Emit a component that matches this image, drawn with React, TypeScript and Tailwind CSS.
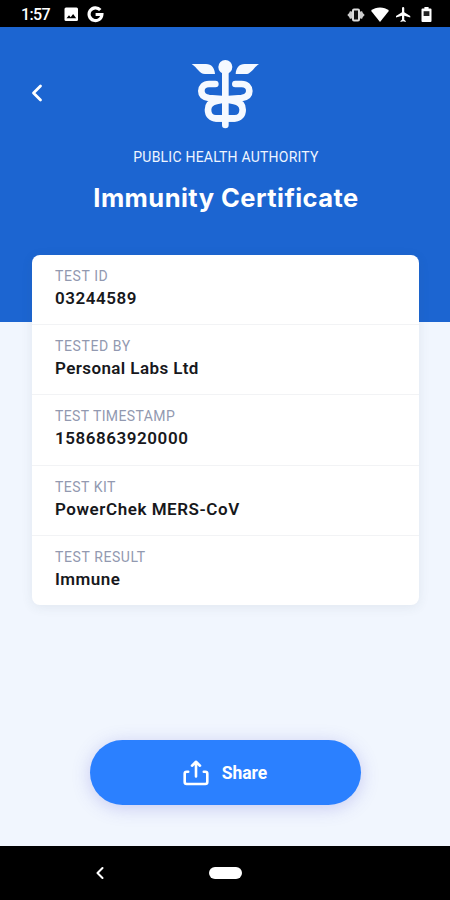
import { ChevronLeft } from "lucide-react";

const details = [
  { label: "TEST ID", value: "03244589", labelSpacing: "tracking-[0.6px]", spacing: "tracking-[0.55px]" },
  { label: "TESTED BY", value: "Personal Labs Ltd", labelSpacing: "tracking-[0.6px]", spacing: "tracking-[0.4px]" },
  { label: "TEST TIMESTAMP", value: "1586863920000", labelSpacing: "tracking-[0.4px]", spacing: "tracking-[0.55px]" },
  { label: "TEST KIT", value: "PowerChek MERS-CoV", labelSpacing: "tracking-[0.5px]", spacing: "tracking-[0.55px]" },
  { label: "TEST RESULT", value: "Immune", labelSpacing: "tracking-[0.6px]", spacing: "tracking-[0.45px]" },
];

function StatusBar() {
  return (
    <div className="flex h-[27px] items-center bg-black pl-[21px] pr-[18px] pt-0.5 text-white">
      <span className="w-[42px] pt-px text-[16px] font-medium leading-none tracking-[-0.6px]">1:57</span>
      {/* Screenshot notification */}
      <svg width="15" height="15" viewBox="0 0 15 15" className="ml-px">
        <rect x="0.5" y="0.5" width="13.5" height="13.5" rx="1.5" fill="#fff" />
        <path d="M2.5 11.3 5 8.2l1.7 2 2.4-3.1 3.1 4.2Z" fill="#000" />
      </svg>
      {/* Google notification */}
      <svg width="17" height="17" viewBox="0 0 17 17" className="ml-[8px]" fill="none" stroke="#fff" strokeWidth="3.2">
        <path d="M13.3 4A6.4 6.4 0 1 0 14.9 8.5H8.6" />
      </svg>

      <div className="ml-auto flex items-center">
        <svg width="18" height="14" viewBox="0 0 18 14">
          <path d="M0.3 7 4 3v8ZM17.7 7 14 3v8Z" fill="#ccc" />
          <path d="M3.8 3.5v7M14.2 3.5v7" stroke="#ccc" strokeWidth="2.4" />
          <rect x="6" y="1.5" width="6" height="11" rx="1" fill="#111" stroke="#ddd" strokeWidth="2" />
        </svg>
        <svg width="18" height="15" viewBox="0 0 18 15" className="ml-[6px]">
          <path d="M0 3.8C5 -0.5 13 -0.5 18 3.8L9 15Z" fill="#fff" />
        </svg>
        <svg width="15" height="15" viewBox="2 2 20 20" className="ml-[7px]">
          <path d="M21 16v-2l-8-5V3.5a1.5 1.5 0 0 0-3 0V9l-8 5v2l8-2.5V19l-2 1.5V22l3.5-1 3.5 1v-1.5L13 19v-5.5Z" fill="#fff" />
        </svg>
        <svg width="11" height="15" viewBox="0 0 11 15" className="ml-[10px]">
          <path d="M3.4 0h4.2v1.5H9.5a1 1 0 0 1 1 1V14a1 1 0 0 1-1 1h-8a1 1 0 0 1-1-1V2.5a1 1 0 0 1 1-1h1.9Z" fill="#fff" />
          <path d="M2.6 4.2h5.8v4.8H2.6Z" fill="#222" />
        </svg>
      </div>
    </div>
  );
}

function Caduceus() {
  return (
    <svg width="110" height="90" viewBox="0 0 330 270" fill="none" className="text-[#f5f9ff]">
      <g fill="currentColor">
        <circle cx="166" cy="66" r="21" />
        <path d="M65 57H108C125 57 134 69 135 87H105C88 87 82 68 65 57Z" />
        <path d="M267 57H224C207 57 198 69 197 87H227C244 87 250 68 267 57Z" />
      </g>
      <g stroke="currentColor" strokeWidth="20" strokeLinecap="round">
        <path d="M166 66V240" />
        <path d="M136 117H117C102 117 94 127 94 138C94 150 103 157 117 159L166 163L192 168C209 171 218 180 218 194C218 210 208 220 194 220H139" />
        <path d="M196 117H215C230 117 238 127 238 138C238 150 229 157 215 159L166 163L140 168C123 171 114 180 114 194C114 210 124 220 138 220H193" />
      </g>
    </svg>
  );
}

function ShareIcon() {
  return (
    <svg width="26" height="26" viewBox="0 0 26 26" fill="none" stroke="#fff" strokeWidth="2.6" strokeLinecap="round" strokeLinejoin="round">
      <path d="M5.2 11.8H3.7a2 2 0 0 0-2 2V22a2 2 0 0 0 2 2h18.6a2 2 0 0 0 2-2v-8.2a2 2 0 0 0-2-2h-1.5" />
      <path d="M13 16.5V2M9 5.7 13 1.8 17 5.7" />
    </svg>
  );
}

export default function App() {
  return (
    <div className="flex h-[900px] w-[450px] flex-col overflow-hidden bg-[#f1f6fe] font-[Roboto,sans-serif]">
      <StatusBar />

      {/* Header */}
      <header className="grid h-[295px] shrink-0 grid-cols-[60px_1fr_60px] items-start bg-[#1c65d1] pt-[18px] text-white">
        <button aria-label="Back" className="mt-[34px] ml-[23px] w-7">
          <ChevronLeft size={28} strokeWidth={2.4} />
        </button>
        <div className="flex flex-col items-center">
          <Caduceus />
          <p className="mt-[12px] ml-[2px] whitespace-nowrap text-[14px] leading-5 tracking-[0.22px] text-[#eff5ff]">PUBLIC HEALTH AUTHORITY</p>
          <h1 className="mt-[15px] ml-[2px] whitespace-nowrap font-[Inter,sans-serif] text-[25.5px] font-bold leading-8 tracking-[0.45px]">
            Immunity Certificate
          </h1>
        </div>
      </header>

      {/* Certificate details */}
      <main className="relative -mt-[67px] mr-[31px] ml-8 h-[350px] shrink-0 divide-y divide-[#f2f3f5] rounded-lg bg-white shadow-[0_2px_12px_rgba(60,80,90,0.09)]">
        {details.map((item) => (
          <div key={item.label} className="h-[70.2px] pl-[23px] pt-[11px] last:h-[69.2px]">
            <p className={`text-[14px] leading-5 text-[#9299b0] ${item.labelSpacing}`}>{item.label}</p>
            <p className={`mt-px text-[17px] font-semibold leading-[22px] text-[#17181c] ${item.spacing}`}>{item.value}</p>
          </div>
        ))}
      </main>

      <button className="mt-[135px] ml-[90px] flex h-[65px] w-[271px] shrink-0 items-center justify-center gap-[13px] rounded-full bg-[#2b80ff] text-white shadow-[0_3px_18px_rgba(80,80,210,0.26)]">
        <ShareIcon />
        <span className="mr-px pt-px text-[17.5px] font-bold">Share</span>
      </button>

      {/* System navigation */}
      <nav className="mt-auto flex h-[54px] shrink-0 items-center bg-black pl-[90px] text-white">
        <ChevronLeft size={20} strokeWidth={2.5} />
        <span className="ml-[99px] h-[12px] w-[33px] rounded-full bg-white" />
      </nav>
    </div>
  );
}
